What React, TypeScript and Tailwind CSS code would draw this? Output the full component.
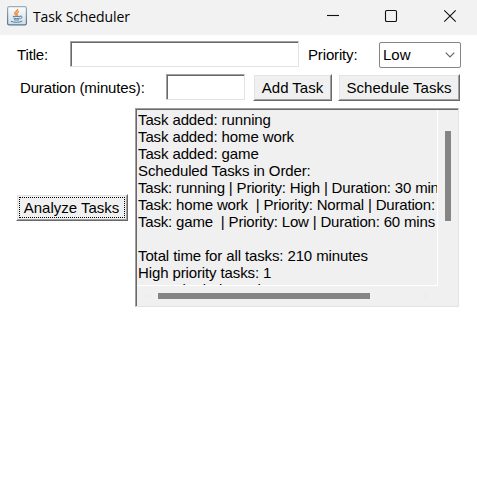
import type { ReactNode } from "react";

const logLines = [
  "Task added: running",
  "Task added: home work",
  "Task added: game",
  "Scheduled Tasks in Order:",
  "Task: running | Priority: High | Duration: 30 mins",
  "Task: home work  | Priority: Normal | Duration: 120 mins",
  "Task: game  | Priority: Low | Duration: 60 mins",
  " ",
  "Total time for all tasks: 210 minutes",
  "High priority tasks: 1",
  "Normal priority tasks: 1",
];

function JavaIcon() {
  return (
    <svg width="20" height="20" viewBox="0 0 20 20" fill="none">
      <defs>
        <linearGradient id="tile" x1="0" y1="0" x2="0" y2="1">
          <stop offset="0" stopColor="#fdfdfd" />
          <stop offset="1" stopColor="#d3dde3" />
        </linearGradient>
        <linearGradient id="edge" x1="0" y1="0" x2="0" y2="1">
          <stop offset="0" stopColor="#9aadbb" />
          <stop offset="1" stopColor="#4e7795" />
        </linearGradient>
      </defs>
      <rect x="0.6" y="0.6" width="18.8" height="18.2" rx="1.6" fill="url(#tile)" stroke="url(#edge)" strokeWidth="1.2" />
      <path d="M10.6 3c.9 1.7-3 2.6-2.8 4.3.1.8.9 1.4 1.3 2.2M12 5.4c-1.2.5-2.4 1.2-2.2 2.2.2.7.9 1 .2 2.2" stroke="#ee8a3c" strokeWidth="1.5" />
      <path d="M5.8 10.4h7.4M6.4 12.1c1.8.6 4.6.6 6.4 0M7 13.7c1.5.5 3.8.5 5.2 0" stroke="#557d9e" strokeWidth="1" />
      <path d="M13 10.2c2.6-.7 2.9 1.8.2 2.6M4 15.3c2.6 1.4 8.8 1.3 11.2-.2" stroke="#557d9e" strokeWidth="1" />
    </svg>
  );
}

function TitleBar() {
  return (
    <header className="flex h-[35px] items-center bg-[#f2f2f2] pl-[7px]">
      <div className="-mt-1">
        <JavaIcon />
      </div>
      <span className="-mt-[2px] ml-[6px] grow font-['Open_Sans',sans-serif] text-[14px] tracking-[-0.1px]">Task Scheduler</span>
      <svg width="151" height="35" fill="none" stroke="#111" strokeWidth="1.1">
        <path d="M1 15.5h12" />
        <rect x="59.5" y="10.5" width="11" height="11" rx="1.3" />
        <path d="m118.3 10.3 11.4 11.4m0-11.4-11.4 11.4" />
      </svg>
    </header>
  );
}

function Field({ className }: { className: string }) {
  return (
    <div className={`h-[26px] border border-t-[#a0a0a0] border-l-[#a0a0a0] border-r-[#e3e3e3] border-b-[#e3e3e3] ${className}`}>
      <div className="h-full border-t border-l border-[#696969]" />
    </div>
  );
}

function Button({ className, focused, children }: { className: string; focused?: boolean; children: ReactNode }) {
  return (
    <button className={`h-[27px] border border-t-white border-l-white border-r-[#696969] border-b-[#696969] ${className}`}>
      <span className="flex h-full items-center justify-center border border-t-[#e3e3e3] border-l-[#e3e3e3] border-r-[#a0a0a0] border-b-[#a0a0a0] bg-[#f0f0f0] p-px">
        <span className={`flex h-full w-full items-center justify-center whitespace-nowrap border border-dotted ${focused ? "border-black pt-[2px] pr-px" : "border-transparent"}`}>
          {children}
        </span>
      </span>
    </button>
  );
}

function LogArea() {
  return (
    <div className="h-[199px] w-[324px] border border-t-[#a0a0a0] border-l-[#a0a0a0] border-r-[#e3e3e3] border-b-[#e3e3e3]">
      <div className="grid h-full grid-cols-[301px_1fr] grid-rows-[176px_1fr] border-t border-l border-[#696969] bg-[#f0f0f0]">
        <div className="overflow-hidden border-r border-b border-white pt-px pl-px leading-[17px]">
          {logLines.map((line, i) => (
            <div key={i} className={`h-[17px] whitespace-pre ${line.includes("|") ? "tracking-[-0.18px]" : "tracking-[-0.12px]"}`}>{line}</div>
          ))}
        </div>
        <div className="pt-[21px] pl-[7px]">
          <div className="h-[90px] w-[6px] bg-[#858585]" />
        </div>
        <div className="flex items-start gap-[7px] pt-[7px] pl-2">
          <svg width="6" height="6">
            <path d="M6 0v6L0 3z" fill="#ededed" />
          </svg>
          <div className="h-[6px] w-[212px] bg-[#858585]" />
          <svg width="6" height="6" className="ml-[46px]">
            <path d="M0 0v6l6-3z" fill="#ededed" />
          </svg>
        </div>
      </div>
    </div>
  );
}

export default function App() {
  return (
    <div className="h-[482px] w-[477px] overflow-hidden bg-white font-['Liberation_Sans',Arial,sans-serif] text-[15px] text-black">
      <TitleBar />
      <main className="pt-[6px]">
        <div className="flex h-[27px] items-start pl-[17px] leading-[27px]">
          <label className="w-[53px] tracking-[-0.15px]">Title:</label>
          <Field className="w-[229px]" />
          <label className="ml-[9px] w-[71px] tracking-[-0.15px]">Priority:</label>
          <div className="mt-px flex h-[26px] w-[82px] items-center justify-between rounded-[2px] border border-[#858585] pr-[5px] pl-[3px]">
            <span className="leading-6">Low</span>
            <svg width="10" height="6" fill="none" stroke="#606060" strokeWidth="1.1">
              <path d="m.7.7 4.3 4.3L9.3.7" />
            </svg>
          </div>
        </div>
        <div className="mt-[6px] flex h-[27px] items-start pl-[20px] leading-[27px]">
          <label className="w-[146px] tracking-[-0.15px]">Duration (minutes):</label>
          <Field className="w-[79px]" />
          <Button className="ml-2 w-[79px]">Add Task</Button>
          <Button className="ml-[6px] w-[122px]">Schedule Tasks</Button>
        </div>
        <div className="mt-[7px] flex items-center gap-[7px] pl-4">
          <Button className="w-[112px]" focused>Analyze Tasks</Button>
          <LogArea />
        </div>
      </main>
    </div>
  );
}
